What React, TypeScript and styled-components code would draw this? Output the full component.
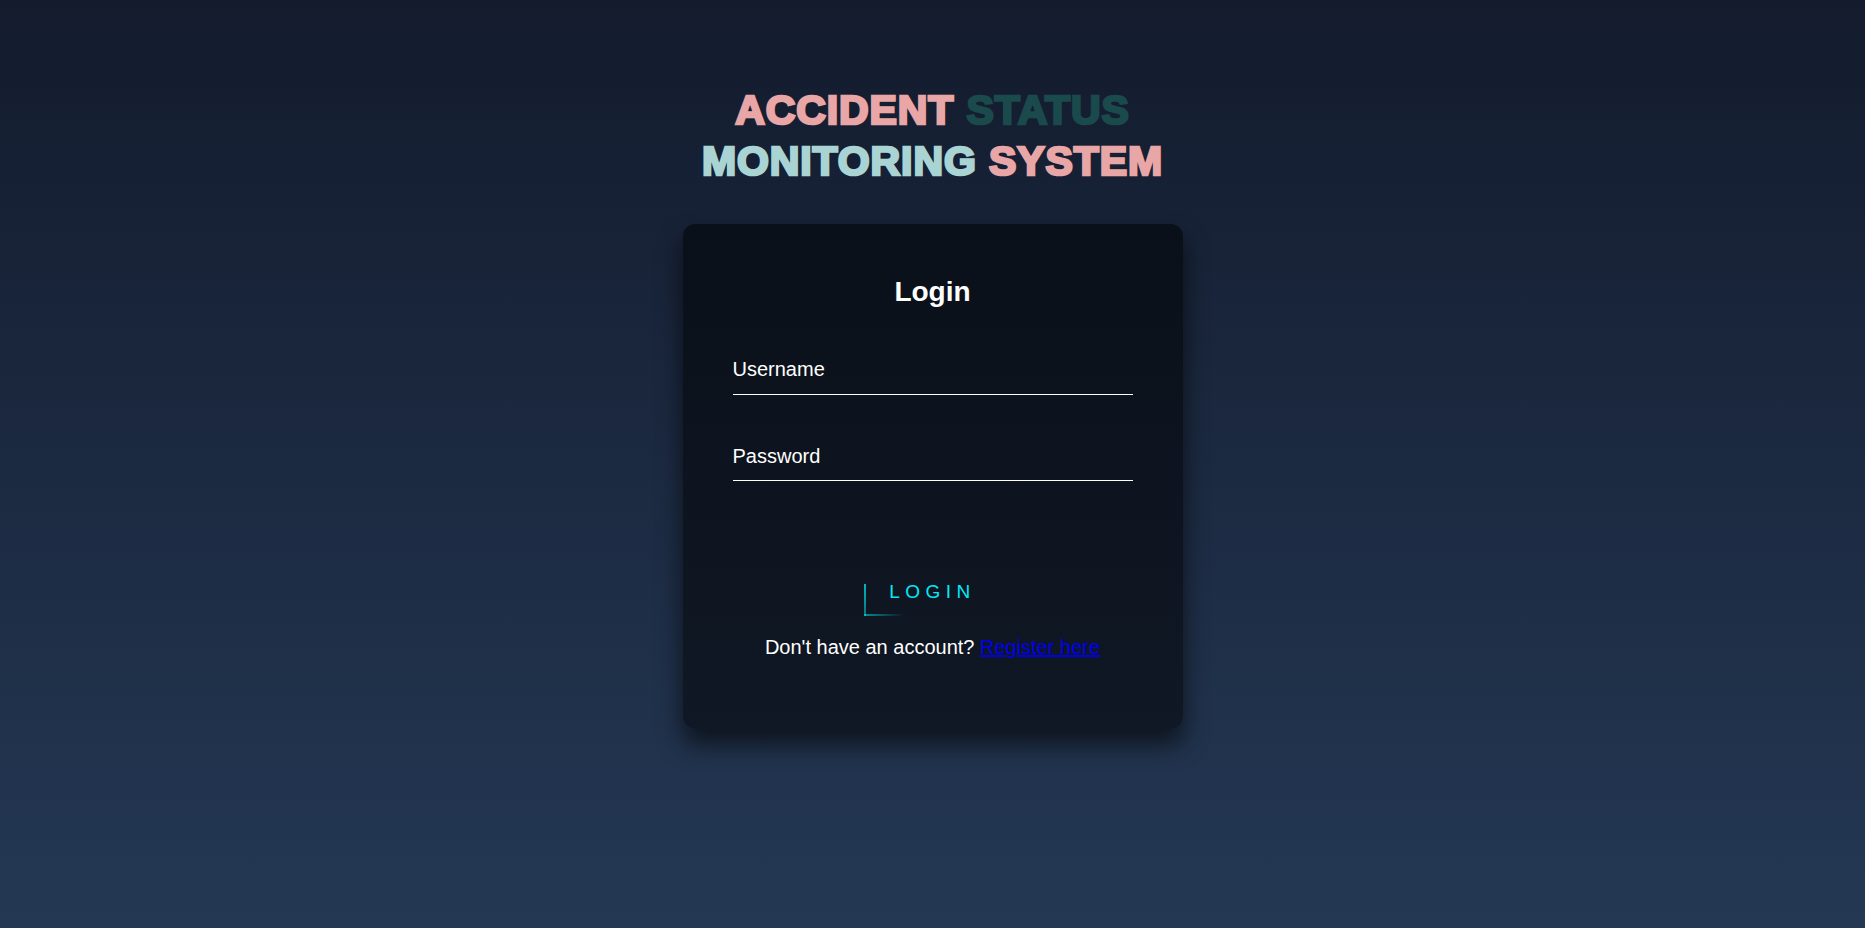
import * as React from "react"
import styled, { createGlobalStyle } from "styled-components"

const GlobalStyle = createGlobalStyle`
  html, body {
    margin: 0;
    padding: 0;
  }
  body {
    font-family: "Liberation Sans", Arial, sans-serif;
    background: linear-gradient(180deg, #131b2d 0%, #243854 100%);
    min-height: 100vh;
  }
  * {
    box-sizing: border-box;
  }
`

const colors = {
  pink: "#e8a6a6",
  darkTeal: "#1a4a4c",
  lightTeal: "#a9d4d3",
  cyan: "#03e9f4",
}

const Page = styled.div`
  min-height: 100vh;
  display: flex;
  flex-direction: column;
  align-items: center;
  padding-top: 85px;
`

const Title = styled.h1`
  margin: 0 0 36.5px;
  font-size: 41px;
  line-height: 51px;
  font-weight: 700;
  letter-spacing: 0.9px;
  text-align: center;
  text-transform: uppercase;
`

// Arial Black isn't around, so thicken the bold face with a stroke
const Word = styled.span<{ $color: string }>`
  color: ${p => p.$color};
  -webkit-text-stroke: 2.6px ${p => p.$color};
  paint-order: stroke fill;
`

const Card = styled.div`
  width: 500px;
  padding: 52.5px 50px 50px;
  border-radius: 12px;
  background: linear-gradient(180deg, #0a1019 0%, #101825 100%);
  box-shadow: 0 15px 25px rgba(0, 0, 0, 0.6);
  display: flex;
  flex-direction: column;
  align-items: stretch;
`

const Heading = styled.h2`
  margin: 0 0 37.5px;
  font-size: 28px;
  line-height: 32px;
  color: #ffffff;
  text-align: center;
`

const Input = styled.input`
  width: 100%;
  padding: 12.5px 0;
  margin: 0 0 37.5px;
  font-family: inherit;
  font-size: 20px;
  line-height: 23px;
  color: #ffffff;
  background: transparent;
  border: none;
  border-bottom: 1px solid #ffffff;
  outline: none;
  &::placeholder {
    color: #ffffff;
    opacity: 1;
  }
`

const ButtonRow = styled.div`
  display: flex;
  justify-content: center;
  margin-top: 50px;
`

const LoginButton = styled.button`
  position: relative;
  padding: 12.5px 25px;
  background: transparent;
  border: none;
  color: ${colors.cyan};
  font-family: inherit;
  font-size: 19px;
  line-height: 22px;
  letter-spacing: 5.5px;
  text-transform: uppercase;
  cursor: pointer;
  overflow: hidden;

  /* the running border lines, caught mid-animation */
  &::before {
    content: "";
    position: absolute;
    left: 0;
    bottom: 0;
    width: 2px;
    height: 32px;
    background: linear-gradient(0deg, rgba(3, 233, 244, 0.45), rgba(3, 233, 244, 0.75));
  }
  &::after {
    content: "";
    position: absolute;
    left: 0;
    bottom: 0;
    width: 40px;
    height: 2px;
    background: linear-gradient(90deg, rgba(3, 233, 244, 0.55), transparent);
  }
`

const Footnote = styled.p`
  margin: 20px 0;
  font-size: 20px;
  line-height: 23px;
  color: #ffffff;
  text-align: center;
`

const Link = styled.a`
  color: #0000ee;
  text-decoration: underline;
`

export default function App() {
  return (
    <>
      <GlobalStyle />
      <Page>
        <Title>
          <Word $color={colors.pink}>Accident</Word>{" "}
          <Word $color={colors.darkTeal}>Status</Word>
          <br />
          <Word $color={colors.lightTeal}>Monitoring</Word>{" "}
          <Word $color={colors.pink}>System</Word>
        </Title>
        <Card>
          <Heading>Login</Heading>
          <Input type="text" placeholder="Username" />
          <Input type="password" placeholder="Password" />
          <ButtonRow>
            <LoginButton type="button">Login</LoginButton>
          </ButtonRow>
          <Footnote>
            Don't have an account? <Link href="#">Register here</Link>
          </Footnote>
        </Card>
      </Page>
    </>
  )
}
